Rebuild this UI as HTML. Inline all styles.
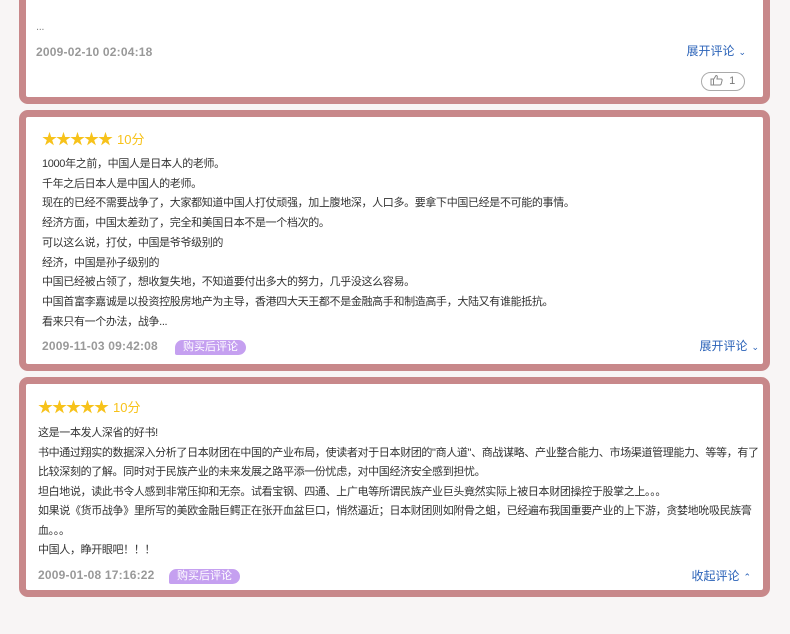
<!DOCTYPE html>
<html><head><meta charset="utf-8"><style>
*{margin:0;padding:0;box-sizing:border-box}
body{width:790px;height:634px;background:#f8f5f5;position:relative;overflow:hidden;font-family:"Liberation Sans","Noto Sans CJK SC",sans-serif;font-size:12px;color:#333}
.card{position:absolute;left:19px;width:751px;background:#fff;border:7px solid #c8888a;border-radius:9px}
.stars{position:absolute;color:#f7c21a;font-size:15px;letter-spacing:-1px;line-height:16px}
.stars span{color:#f7c21a;font-size:13px;margin-left:5px;letter-spacing:0}
.txt{position:absolute;line-height:19.7px;color:#333;font-size:11px;letter-spacing:-0.35px}
.date{position:absolute;color:#999;font-size:12px;font-weight:bold;letter-spacing:0.2px}
.tag{position:absolute;background:#c5a0f0;color:#fff;font-size:11px;line-height:15px;padding:0 8px;border-radius:8px 8px 8px 2px}
.more{position:absolute;color:#2a62b8;font-size:12px}
.more i{font-style:normal;font-size:9px;margin-left:4px;color:#2a62b8}
</style></head><body>
<div class="card" style="top:-20px;height:124px">
<div class="txt" style="left:10px;top:34px;color:#888;line-height:12px">...</div>
<div class="date" style="left:10px;top:58px">2009-02-10 02:04:18</div>
<div class="more" style="right:17px;top:55px">展开评论<i>⌄</i></div>
<div style="position:absolute;left:675px;top:85px;width:44px;height:19px;border:1px solid #aaa;border-radius:10px;font-size:11px;color:#777;line-height:17px;padding-left:8px">
<svg width="13" height="12" viewBox="0 0 13 12" style="vertical-align:-2px"><path d="M1 5h2.5v6H1zM3.5 5.5L6 1.5c1 0 1.5.6 1.3 1.6L7 5h4c.8 0 1.3.7 1.1 1.4l-1 3.8c-.2.5-.6.8-1.1.8H3.5" fill="none" stroke="#888" stroke-width="1"/></svg>&nbsp; 1</div>
</div>
<div class="card" style="top:110px;height:261px">
<div class="stars" style="left:16px;top:15px">★★★★★<span>10分</span></div>
<div class="txt" style="left:16px;top:38px">1000年之前，中国人是日本人的老师。<br>千年之后日本人是中国人的老师。<br>现在的已经不需要战争了，大家都知道中国人打仗顽强，加上腹地深，人口多。要拿下中国已经是不可能的事情。<br>经济方面，中国太差劲了，完全和美国日本不是一个档次的。<br>可以这么说，打仗，中国是爷爷级别的<br>经济，中国是孙子级别的<br>中国已经被占领了，想收复失地，不知道要付出多大的努力，几乎没这么容易。<br>中国首富李嘉诚是以投资控股房地产为主导，香港四大天王都不是金融高手和制造高手，大陆又有谁能抵抗。<br>看来只有一个办法，战争...</div>
<div class="date" style="left:16px;top:222px">2009-11-03 09:42:08</div>
<div class="tag" style="left:149px;top:223px">购买后评论</div>
<div class="more" style="right:4px;top:220px">展开评论<i>⌄</i></div>
</div>
<div class="card" style="top:377px;height:220px">
<div class="stars" style="left:12px;top:16px">★★★★★<span>10分</span></div>
<div class="txt" style="left:12px;top:40px;line-height:19.5px;width:722px">这是一本发人深省的好书!<br>书中通过翔实的数据深入分析了日本财团在中国的产业布局，使读者对于日本财团的"商人道"、商战谋略、产业整合能力、市场渠道管理能力、等等，有了比较深刻的了解。同时对于民族产业的未来发展之路平添一份忧虑，对中国经济安全感到担忧。<br>坦白地说，读此书令人感到非常压抑和无奈。试看宝钢、四通、上广电等所谓民族产业巨头竟然实际上被日本财团操控于股掌之上。。。<br>如果说《货币战争》里所写的美欧金融巨鳄正在张开血盆巨口，悄然逼近；日本财团则如附骨之蛆，已经遍布我国重要产业的上下游，贪婪地吮吸民族膏血。。。<br>中国人，睁开眼吧！！！</div>
<div class="date" style="left:12px;top:184px">2009-01-08 17:16:22</div>
<div class="tag" style="left:143px;top:185px">购买后评论</div>
<div class="more" style="right:12px;top:183px">收起评论<i>⌃</i></div>
</div>
</body></html>
